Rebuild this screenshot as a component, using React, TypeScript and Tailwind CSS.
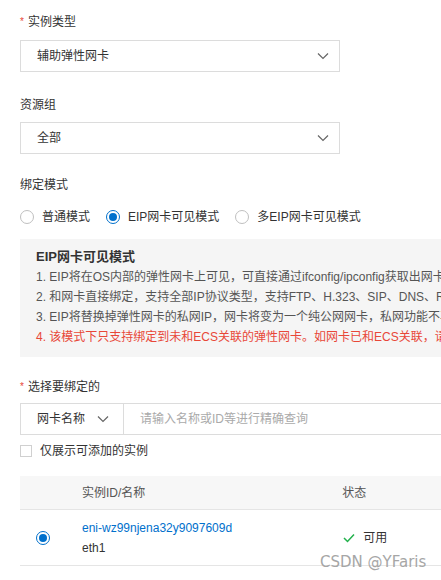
import React from "react";

const font = { fontFamily: '"Liberation Sans", "Noto Sans CJK SC", sans-serif' };

function Chevron({ className = "" }: { className?: string }) {
  return (
    <svg width="12" height="8" viewBox="0 0 12 8" className={className}>
      <path d="M1 1.5 L6 6.5 L11 1.5" fill="none" stroke="#666" strokeWidth="1.2" />
    </svg>
  );
}

function Select({ value }: { value: string }) {
  return (
    <div className="w-[320px] h-[32px] border border-[#dcdcdc] bg-white flex items-center justify-between pl-[16px] pr-[10px]">
      <span className="text-[12px] text-[#333]">{value}</span>
      <Chevron />
    </div>
  );
}

function Radio({ checked }: { checked?: boolean }) {
  return (
    <span
      className={
        "w-[14px] h-[14px] rounded-full border flex items-center justify-center bg-white " +
        (checked ? "border-[#0070cc]" : "border-[#bfbfbf]")
      }
    >
      {checked && <span className="w-[8px] h-[8px] rounded-full bg-[#0070cc]" />}
    </span>
  );
}

export default function App() {
  return (
    <div className="w-[441px] h-[580px] bg-white overflow-hidden relative text-[#333]" style={font}>
      <div className="pl-[20px] pt-[14px] flex flex-col">
        <div className="text-[12px] leading-[16px] flex items-center">
          <span className="text-[#e84738] mr-[4px] text-[10px]">*</span>
          实例类型
        </div>
        <div className="mt-[10px]">
          <Select value="辅助弹性网卡" />
        </div>

        <div className="text-[12px] leading-[16px] mt-[25px]">资源组</div>
        <div className="mt-[9px]">
          <Select value="全部" />
        </div>

        <div className="text-[12px] leading-[16px] mt-[23px]">绑定模式</div>
        <div className="mt-[16px] flex items-center text-[12px] h-[16px]">
          <Radio />
          <span className="ml-[8px]">普通模式</span>
          <span className="ml-[16px]"><Radio checked /></span>
          <span className="ml-[8px]">EIP网卡可见模式</span>
          <span className="ml-[16px]"><Radio /></span>
          <span className="ml-[8px]">多EIP网卡可见模式</span>
        </div>

        <div className="mt-[14px] bg-[#f5f5f5] w-[421px] h-[118px] pl-[16px] pt-[8px] whitespace-nowrap overflow-hidden text-[12px] leading-[20px] text-[#555]">
          <div className="font-bold text-[13px] text-[#333]">EIP网卡可见模式</div>
          <div>1. EIP将在OS内部的弹性网卡上可见，可直接通过ifconfig/ipconfig获取出网卡上的EIP地址</div>
          <div>2. 和网卡直接绑定，支持全部IP协议类型，支持FTP、H.323、SIP、DNS、RTSP、TFTP等协议</div>
          <div>3. EIP将替换掉弹性网卡的私网IP，网卡将变为一个纯公网网卡，私网功能不再可用</div>
          <div className="text-[#e84738]">4. 该模式下只支持绑定到未和ECS关联的弹性网卡。如网卡已和ECS关联，请先解绑</div>
        </div>

        <div className="text-[12px] leading-[16px] flex items-center mt-[22px]">
          <span className="text-[#e84738] mr-[4px] text-[10px]">*</span>
          选择要绑定的
        </div>
        <div className="mt-[8px] flex h-[32px] w-[421px] border border-[#dcdcdc] border-r-0">
          <div className="w-[103px] border-r border-[#dcdcdc] flex items-center justify-between pl-[16px] pr-[14px] text-[12px]">
            <span>网卡名称</span>
            <Chevron />
          </div>
          <div className="flex items-center pl-[16px] text-[12px] text-[#aaa]">请输入名称或ID等进行精确查询</div>
        </div>
        <div className="mt-[8px] flex items-center text-[12px] h-[16px]">
          <span className="w-[12px] h-[12px] border border-[#d0d0d0] bg-white" />
          <span className="ml-[8px]">仅展示可添加的实例</span>
        </div>

        <div className="mt-[17px] w-[421px] h-[34px] bg-[#f7f7f7] flex items-center text-[12px] text-[#555] border-b border-[#e5e5e5]">
          <span className="ml-[62px]">实例ID/名称</span>
          <span className="ml-[197px]">状态</span>
        </div>
        <div className="w-[421px] h-[56px] flex items-center border-b border-[#e5e5e5] text-[12px]">
          <span className="ml-[16px]"><Radio checked /></span>
          <div className="ml-[32px] flex flex-col leading-[20px]">
            <span className="text-[#0070cc]">eni-wz99njena32y9097609d</span>
            <span>eth1</span>
          </div>
          <div className="ml-[111px] flex items-center">
            <svg width="12" height="10" viewBox="0 0 12 10">
              <path d="M1 5 L4.5 8.5 L11 1.5" fill="none" stroke="#22b14c" strokeWidth="1.5" />
            </svg>
            <span className="ml-[8px]">可用</span>
          </div>
        </div>
      </div>
      <div
        className="absolute left-[320px] top-[551px] text-[15px] text-[#a6a6a6]"
        style={{ fontFamily: '"DejaVu Sans", sans-serif' }}
      >
        CSDN @YFaris
      </div>
    </div>
  );
}
